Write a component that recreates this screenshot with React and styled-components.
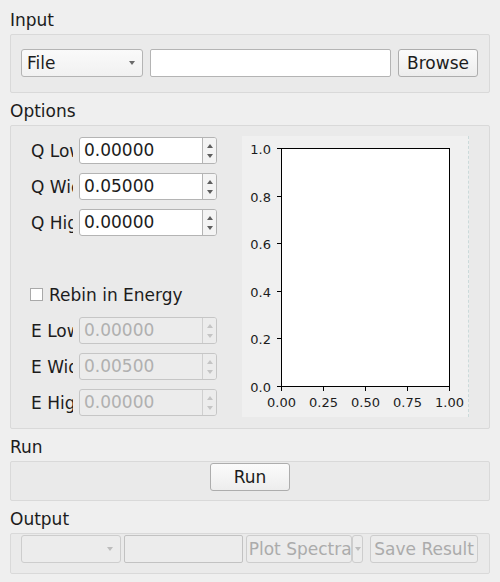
import React from 'react'
import styled, { createGlobalStyle } from 'styled-components'

const GlobalStyle = createGlobalStyle`
  html, body {
    margin: 0;
    padding: 0;
    background: #efefef;
  }
  body {
    font-family: "DejaVu Sans", "Noto Sans", sans-serif;
    font-size: 17px;
    color: #1c1c1c;
  }
`

const Page = styled.div`
  width: 500px;
  box-sizing: border-box;
  padding: 8px 10px 0;
`

const SectionTitle = styled.div`
  height: 24px;
  line-height: 24px;
  margin: ${props => props.$first ? '0' : '6px'} 0 2px;
`

const GroupBox = styled.div`
  box-sizing: border-box;
  display: flex;
  background: #eaeaea;
  border: 1px solid #d9d9d9;
  border-radius: 2px;
  padding: ${props => props.$pad};
  gap: ${props => props.$gap || 0}px;
  justify-content: ${props => props.$center ? 'center' : 'flex-start'};
  align-items: flex-start;
`

const Combo = styled.div`
  box-sizing: border-box;
  display: flex;
  align-items: center;
  justify-content: space-between;
  width: ${props => props.$w}px;
  height: 28px;
  padding: 0 7px 0 5px;
  border: 1px solid ${props => props.$disabled ? '#cdcdcd' : '#b4b4b4'};
  border-radius: 3px;
  background: ${props => props.$disabled ? '#ececec' : 'linear-gradient(#fafafa, #f1f1f1)'};
`

const DownArrow = styled.span`
  width: 0;
  height: 0;
  border-left: 3.5px solid transparent;
  border-right: 3.5px solid transparent;
  border-top: 4px solid ${props => props.$disabled ? '#bdbdbd' : '#6a6a6a'};
`

const LineEdit = styled.div`
  box-sizing: border-box;
  height: 28px;
  flex: ${props => props.$w ? 'none' : 1};
  width: ${props => props.$w ? `${props.$w}px` : 'auto'};
  border: 1px solid ${props => props.$disabled ? '#c2c2c2' : '#b4b4b4'};
  border-radius: 2px;
  background: ${props => props.$disabled ? '#ececec' : '#ffffff'};
`

const Button = styled.div`
  box-sizing: border-box;
  height: 28px;
  width: ${props => props.$w ? `${props.$w}px` : 'auto'};
  margin-left: ${props => props.$ml || 0}px;
  padding: 0 ${props => props.$padX ?? 8}px;
  line-height: 26px;
  text-align: ${props => props.$left ? 'left' : 'center'};
  white-space: nowrap;
  overflow: hidden;
  border: 1px solid ${props => props.$disabled ? '#cdcdcd' : '#adadad'};
  border-radius: 3px;
  color: ${props => props.$disabled ? '#ababab' : '#1c1c1c'};
  background: ${props => props.$disabled ? '#ececec' : 'linear-gradient(#fbfbfb, #ededed)'};
`

const SplitArrow = styled.div`
  box-sizing: border-box;
  width: 11px;
  height: 28px;
  margin-left: -3px;
  display: flex;
  align-items: center;
  justify-content: center;
  border: 1px solid #cdcdcd;
  border-radius: 3px;
  background: #ececec;
`

const Column = styled.div`
  display: flex;
  flex-direction: column;
  gap: 9px;
  width: 187px;
`

const FieldRow = styled.div`
  display: flex;
  align-items: center;
  gap: 6px;
  height: 27px;
`

const FieldLabel = styled.div`
  box-sizing: border-box;
  width: 43px;
  padding-left: 1px;
  white-space: nowrap;
  overflow: hidden;
`

const SpinBox = styled.div`
  box-sizing: border-box;
  display: flex;
  width: 138px;
  height: 27px;
  border: 1px solid ${props => props.$disabled ? '#c6c6c6' : '#b4b4b4'};
  border-radius: 3px;
  background: ${props => props.$disabled ? '#ececec' : '#ffffff'};
  color: ${props => props.$disabled ? '#b0b0b0' : '#1c1c1c'};
`

const SpinValue = styled.div`
  flex: 1;
  padding-left: 4px;
  line-height: 25px;
`

const SpinArrows = styled.div`
  width: 13px;
  display: flex;
  flex-direction: column;
  align-items: center;
  justify-content: center;
  gap: 6px;
  border-left: 1px solid ${props => props.$disabled ? '#cfcfcf' : '#b4b4b4'};
  border-radius: 0 2px 2px 0;
  background: ${props => props.$disabled ? '#ececec' : '#f4f4f4'};
`

const Tri = styled.span`
  width: 0;
  height: 0;
  border-left: 3px solid transparent;
  border-right: 3px solid transparent;
  ${props => props.$up ? 'border-bottom' : 'border-top'}: 4px solid ${props => props.$disabled ? '#c4c4c4' : '#5e5e5e'};
`

const Spacer = styled.div`
  height: 27px;
`

const CheckRow = styled.div`
  display: flex;
  align-items: center;
  gap: 6px;
  height: 27px;
`

const CheckBox = styled.span`
  box-sizing: border-box;
  width: 13px;
  height: 13px;
  border: 1px solid #a9a9a9;
  background: #ffffff;
`

const PlotArea = styled.div`
  box-sizing: border-box;
  width: 227px;
  height: 281px;
  margin-top: -1px;
  background: #f0f0f0;
  border-right: 1px dashed #cbdada;

  svg {
    display: block;
  }
`

const SpinField = ({ label, value, disabled }) => (
  <FieldRow>
    <FieldLabel>{label}</FieldLabel>
    <SpinBox $disabled={disabled}>
      <SpinValue>{value}</SpinValue>
      <SpinArrows $disabled={disabled}>
        <Tri $up $disabled={disabled} />
        <Tri $disabled={disabled} />
      </SpinArrows>
    </SpinBox>
  </FieldRow>
)

const Chart = () => {
  const left = 39
  const top = 12
  const w = 168
  const h = 238
  const ticks = [0, 0.2, 0.4, 0.6, 0.8, 1.0]
  const xticks = [0, 0.25, 0.5, 0.75, 1.0]
  return (
    <svg width="226" height="281" viewBox="0 0 226 281">
      <rect x={left + 0.5} y={top + 0.5} width={w} height={h} fill="#ffffff" stroke="#000" strokeWidth="1" />
      {ticks.map(t => {
        const y = Math.round(top + h - t * h) + 0.5
        return (
          <g key={t}>
            <line x1={left - 4} x2={left} y1={y} y2={y} stroke="#000" />
            <text x="29" y={y + 5} textAnchor="end" fontSize="13" fontFamily="DejaVu Sans, sans-serif" fill="#1c1c1c">
              {t.toFixed(1)}
            </text>
          </g>
        )
      })}
      {xticks.map(t => {
        const x = Math.round(left + t * w) + 0.5
        return (
          <g key={t}>
            <line x1={x} x2={x} y1={top + h + 0.5} y2={top + h + 5} stroke="#000" />
            <text x={x} y="271" textAnchor="middle" fontSize="13" fontFamily="DejaVu Sans, sans-serif" fill="#1c1c1c">
              {t.toFixed(2)}
            </text>
          </g>
        )
      })}
    </svg>
  )
}

const App = () => {
  return (
    <Page>
      <GlobalStyle />

      <SectionTitle $first>Input</SectionTitle>
      <GroupBox $pad="14px 11px 15px 10px" $gap={7}>
        <Combo $w={122}>
          <span>File</span>
          <DownArrow />
        </Combo>
        <LineEdit />
        <Button $w={80}>Browse</Button>
      </GroupBox>

      <SectionTitle>Options</SectionTitle>
      <GroupBox $pad="11px 20px 11px 19px" $gap={25}>
        <Column>
          <SpinField label="Q Low" value="0.00000" />
          <SpinField label="Q Width" value="0.05000" />
          <SpinField label="Q High" value="0.00000" />
          <Spacer />
          <CheckRow>
            <CheckBox />
            <span>Rebin in Energy</span>
          </CheckRow>
          <SpinField label="E Low" value="0.00000" disabled />
          <SpinField label="E Width" value="0.00500" disabled />
          <SpinField label="E High" value="0.00000" disabled />
        </Column>
        <PlotArea>
          <Chart />
        </PlotArea>
      </GroupBox>

      <SectionTitle>Run</SectionTitle>
      <GroupBox $pad="1px 0 9px" $center>
        <Button $w={80}>Run</Button>
      </GroupBox>

      <SectionTitle>Output</SectionTitle>
      <GroupBox $pad="1px 11px 10px 10px" $gap={3}>
        <Combo $w={100} $disabled>
          <span />
          <DownArrow $disabled />
        </Combo>
        <LineEdit $w={119} $disabled />
        <Button $w={107} $padX={2} $left $disabled>Plot Spectra</Button>
        <SplitArrow>
          <DownArrow $disabled />
        </SplitArrow>
        <Button $w={108} $padX={3} $ml={4} $disabled>Save Result</Button>
      </GroupBox>
    </Page>
  )
}

export default App
